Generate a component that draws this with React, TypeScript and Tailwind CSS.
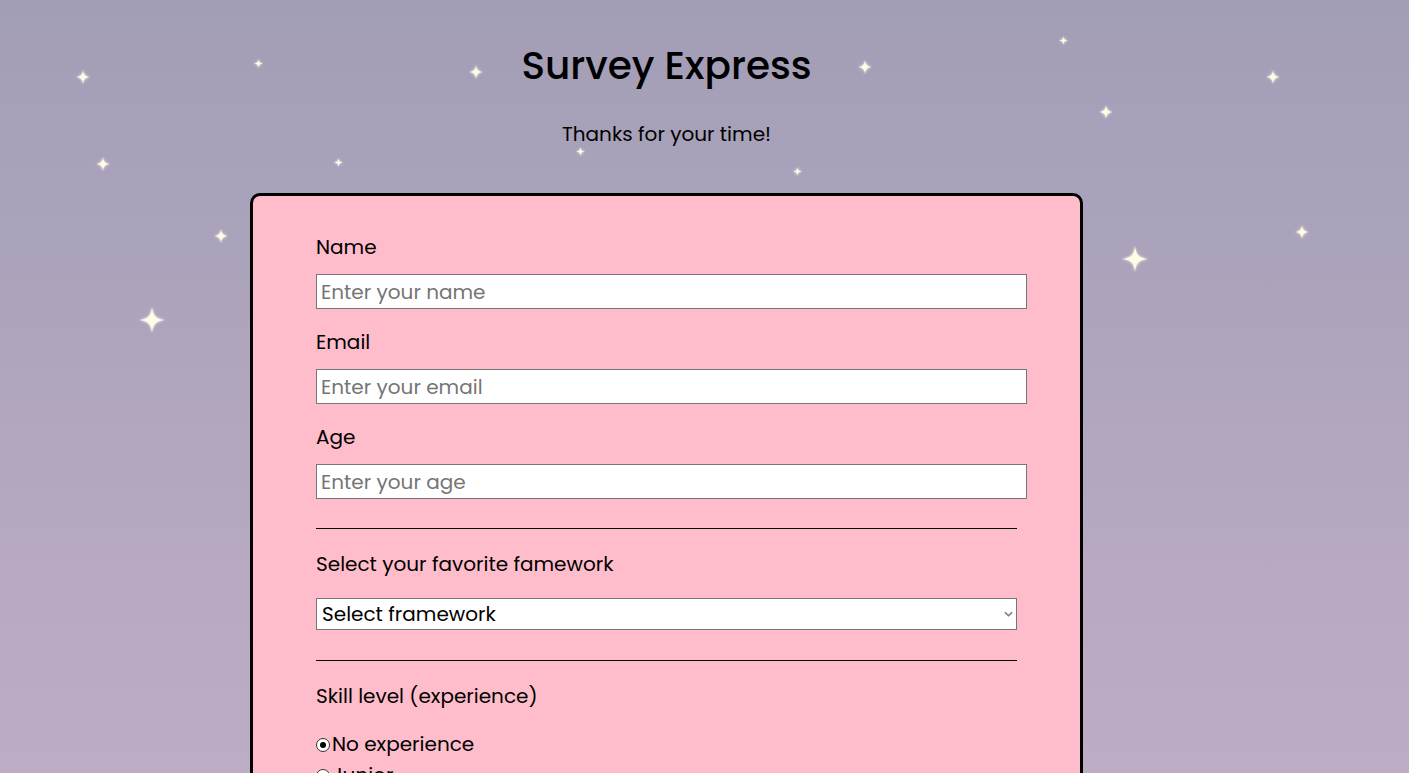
import React from 'react';

// sparkle positions on the background (center x, center y, size)
const stars: [number, number, number][] = [
  [83, 77, 14],
  [258, 63, 9],
  [476, 72, 14],
  [865, 67, 14],
  [1063, 40, 9],
  [1273, 77, 14],
  [1106, 112, 14],
  [103, 164, 14],
  [338, 162, 9],
  [580, 151, 9],
  [797, 171, 9],
  [221, 236, 14],
  [152, 320, 26],
  [1135, 259, 26],
  [1302, 232, 14],
];

const Sparkle = ({ x, y, size }: { x: number; y: number; size: number }) => (
  <svg
    viewBox="0 0 24 24"
    className="absolute drop-shadow-[0_0_1.5px_#fffbe6]"
    style={{ left: x - size / 2, top: y - size / 2, width: size, height: size }}
  >
    <path
      d="M12 0C12.9 8 15 11 24 12C15 13 12.9 16 12 24C11.1 16 9 13 0 12C9 11 11.1 8 12 0Z"
      fill="#fffbe6"
    />
  </svg>
);

const Field = ({ label, placeholder }: { label: string; placeholder: string }) => (
  <div className="flex flex-col">
    <label className="text-[20px] leading-[28px] text-black">{label}</label>
    <input
      placeholder={placeholder}
      className="mt-[13px] h-[35px] w-[711px] border border-[#767676] bg-white px-[4px] text-[20px] text-black outline-none placeholder:text-[#757575]"
    />
  </div>
);

const Radio = ({ label, checked }: { label: string; checked?: boolean }) => (
  <label className="flex items-center text-[20px] leading-[31px]">
    <span className="mr-[2px] flex h-[14px] w-[14px] items-center justify-center rounded-full border border-[#333] bg-white">
      {checked && <span className="h-[6px] w-[6px] rounded-full bg-black" />}
    </span>
    {label}
  </label>
);

export default function App() {
  return (
    <div
      className="relative min-h-screen overflow-hidden bg-gradient-to-b from-[#a29eb6] to-[#c1afc6]"
      style={{ fontFamily: '"Poppins", "Open Sans", sans-serif' }}
    >
      {stars.map(([x, y, s], i) => (
        <Sparkle key={i} x={x} y={y} size={s} />
      ))}
      <div className="relative flex flex-col items-center pt-[38px] pr-[76px]">
        <h1 className="text-[39px] leading-[56px] font-medium text-black">Survey Express</h1>
        <p className="mt-[26px] text-[20px] leading-[28px] text-black">Thanks for your time!</p>

        <form className="mt-[45px] w-[833px] rounded-[10px] border-[3px] border-black bg-[#ffbdcb] pl-[63px] pt-[37px] pb-10">
          <div className="flex flex-col gap-[19px]">
            <Field label="Name" placeholder="Enter your name" />
            <Field label="Email" placeholder="Enter your email" />
            <Field label="Age" placeholder="Enter your age" />
          </div>

          <hr className="mt-[29px] w-[701px] border-t border-black" />

          <p className="mt-[21px] text-[20px] leading-[28px]">Select your favorite famework</p>
          <div className="relative mt-[20px] w-[701px]">
            <select className="h-[32px] w-full appearance-none border border-[#767676] bg-white px-[5px] text-[20px] text-black">
              <option>Select framework</option>
            </select>
            <svg viewBox="0 0 10 6" className="pointer-events-none absolute right-[4px] top-[13px] h-[6px] w-[9px]">
              <path d="M1 1L5 5L9 1" fill="none" stroke="#767676" strokeWidth="1.6" />
            </svg>
          </div>

          <hr className="mt-[30px] w-[701px] border-t border-black" />

          <p className="mt-[21px] text-[20px] leading-[28px]">Skill level (experience)</p>
          <div className="mt-[19px] flex flex-col">
            <Radio label="No experience" checked />
            <Radio label="Junior" />
            <Radio label="Senior" />
          </div>
        </form>
      </div>
    </div>
  );
}
